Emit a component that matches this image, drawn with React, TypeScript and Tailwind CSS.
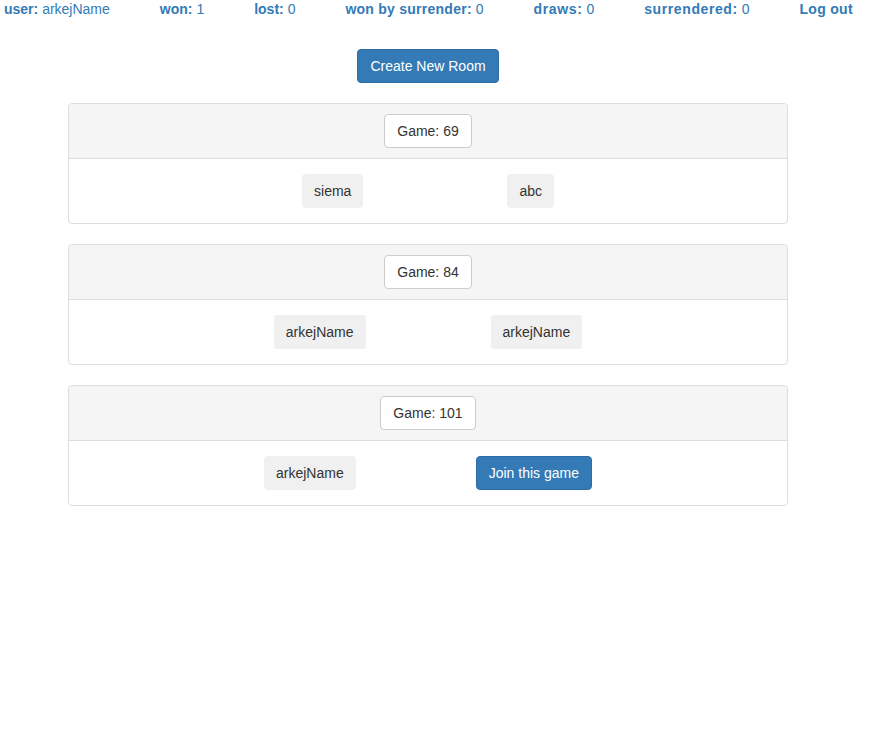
const stats = [
  { label: 'user:', value: 'arkejName', cls: '' },
  { label: 'won:', value: '1', cls: '' },
  { label: 'lost:', value: '0', cls: '' },
  { label: 'won by surrender:', value: '0', cls: 'tracking-[0.25px]' },
  { label: 'draws:', value: '0', cls: 'tracking-[0.65px]' },
  { label: 'surrendered:', value: '0', cls: 'tracking-[0.6px]' },
];

const games = [
  { id: 69, players: ['siema', 'abc'], gap: 'gap-[144px]', join: false },
  { id: 84, players: ['arkejName', 'arkejName'], gap: 'gap-[125px]', join: false },
  { id: 101, players: ['arkejName'], gap: 'gap-[120px]', join: true },
];

function PlayerTag({ name }: { name: string }) {
  return (
    <span className="inline-block h-[34px] px-3 leading-[34px] rounded bg-[#f0f0f0] text-[#333]">
      {name}
    </span>
  );
}

export default function App() {
  return (
    <div
      className="min-h-screen bg-white text-[14px] text-[#333]"
      style={{ fontFamily: '"Liberation Sans", Arial, sans-serif' }}
    >
      {/* Top stats bar */}
      <div className="flex gap-[50px] pl-[4px] leading-[18px] text-[#337ab7]">
        {stats.map((s) => (
          <span key={s.label}>
            <b className={s.cls}>{s.label}</b> {s.value}
          </span>
        ))}
        <a className="font-bold tracking-[0.3px] cursor-pointer">Log out</a>
      </div>

      <div className="w-[720px] ml-[68px]">
        <div className="flex justify-center mt-[31px]">
          <button className="h-[34px] px-3 rounded bg-[#337ab7] border border-[#2e6da4] text-white">
            Create New Room
          </button>
        </div>

        <div className="mt-[20px] flex flex-col gap-[20px]">
          {games.map((g) => (
            <div key={g.id} className="border border-[#ddd] rounded bg-white">
              <div className="flex justify-center py-[10px] bg-[#f5f5f5] border-b border-[#ddd] rounded-t">
                <span className="inline-block h-[34px] px-3 leading-[32px] rounded border border-[#ccc] bg-white">
                  Game: {g.id}
                </span>
              </div>
              <div className={`flex justify-center py-[15px] ${g.gap}`}>
                {g.players.map((p, i) => (
                  <PlayerTag key={i} name={p} />
                ))}
                {g.join && (
                  <button className="h-[34px] px-3 rounded bg-[#337ab7] border border-[#2e6da4] text-white">
                    Join this game
                  </button>
                )}
              </div>
            </div>
          ))}
        </div>
      </div>
    </div>
  );
}
